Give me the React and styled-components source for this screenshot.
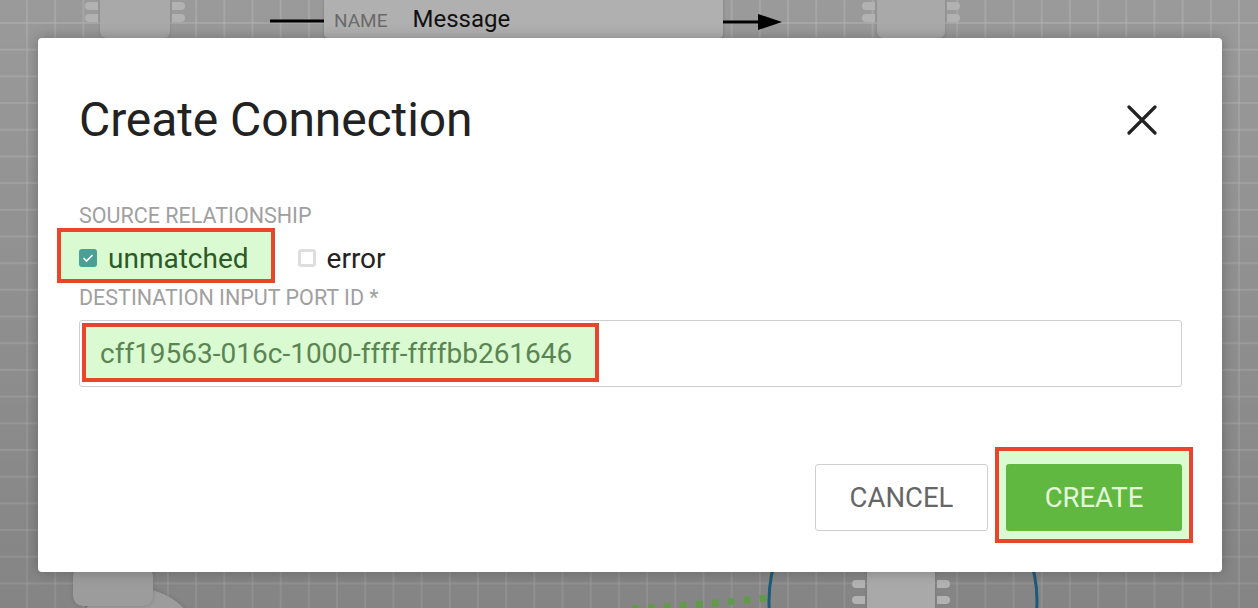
import React from "react";
import styled, { createGlobalStyle } from "styled-components";

const GlobalStyle = createGlobalStyle`
  html, body { margin: 0; padding: 0; }
  body {
    width: 1258px;
    height: 608px;
    overflow: hidden;
    font-family: Roboto, "Liberation Sans", Arial, sans-serif;
  }
`;

const Canvas = styled.div`
  position: relative;
  width: 1258px;
  height: 608px;
  overflow: hidden;
  background-color: #9a9a9a;
  background-image:
    linear-gradient(to right, rgba(190, 190, 190, 0.35) 2px, transparent 2px),
    linear-gradient(to bottom, rgba(190, 190, 190, 0.35) 2px, transparent 2px);
  background-size: 28.2px 26.7px;
  background-position: 26px 22px;
`;

const Shade = styled.div`
  position: absolute;
  inset: 0;
  background: linear-gradient(to bottom, rgba(0, 0, 0, 0) 0%, rgba(0, 0, 0, 0.14) 100%);
`;

const Node = styled.div`
  position: absolute;
  left: ${(p) => p.x}px;
  top: ${(p) => p.y}px;
  width: ${(p) => p.w}px;
  height: ${(p) => p.h}px;
  background: #a9a9a9;
  border-radius: 6px;
  box-shadow: 0 1px 3px rgba(0, 0, 0, 0.15);
`;

const Port = styled.span`
  position: absolute;
  ${(p) => (p.side === "left" ? "left: -15px;" : "right: -15px;")}
  top: ${(p) => p.y}px;
  width: 13px;
  height: 8px;
  background: #b2b2b2;
  border-radius: ${(p) => (p.side === "left" ? "4px 0 0 4px" : "0 4px 4px 0")};
`;

const NameLabel = styled.div`
  position: absolute;
  left: 324px;
  top: -4px;
  width: 399px;
  height: 42px;
  background: #b0b0b0;
  border-radius: 4px;
  display: flex;
  align-items: center;
  padding-left: 10px;
  gap: 25px;
  box-sizing: border-box;
  box-shadow: 0 1px 3px rgba(0, 0, 0, 0.2);
`;

const NameKey = styled.span`
  font-size: 19px;
  color: #6a6a6a;
  margin-top: 6px;
`;

const NameValue = styled.span`
  font-size: 24px;
  color: #111;
  margin-top: 4px;
`;

const Wires = styled.svg`
  position: absolute;
  left: 0;
  top: 0;
`;

const BlobHead = styled.div`
  position: absolute;
  left: 73px;
  top: 566px;
  width: 80px;
  height: 40px;
  background: #9c9c9c;
  border-radius: 10px;
  box-shadow: 0 0 4px rgba(0, 0, 0, 0.15);
`;

const BlobBody = styled.div`
  position: absolute;
  left: 70px;
  top: 588px;
  width: 130px;
  height: 120px;
  background: #9c9c9c;
  border-radius: 50%;
  box-shadow: 0 0 4px rgba(0, 0, 0, 0.15);
`;

const Overlay = styled.div`
  position: absolute;
  inset: 0;
  display: flex;
  align-items: flex-start;
  justify-content: flex-start;
  padding: 38px 0 0 38px;
`;

const Modal = styled.div`
  width: 1184px;
  height: 534px;
  background: #fff;
  border-radius: 4px;
  box-shadow: 0 0 14px rgba(0, 0, 0, 0.25);
  box-sizing: border-box;
  padding: 41px 40px 0 41px;
  display: flex;
  flex-direction: column;
`;

const Header = styled.div`
  display: flex;
  align-items: center;
  justify-content: space-between;
  height: 80px;
`;

const Title = styled.h1`
  margin: 0;
  font-weight: 400;
  font-size: 48px;
  color: #222;
  letter-spacing: -0.1px;
`;

const CloseButton = styled.button`
  border: 0;
  background: none;
  padding: 0;
  width: 30px;
  height: 30px;
  margin-right: 25px;
  margin-top: 2px;
  display: flex;
  cursor: pointer;
`;

const FieldLabel = styled.div`
  font-size: 21.5px;
  color: #a0a0a0;
  text-transform: uppercase;
  line-height: 24px;
  margin-top: ${(p) => p.top || 0}px;
`;

const CheckRow = styled.div`
  display: flex;
  align-items: center;
  margin-left: -22px;
  height: 55px;
`;

const CheckOption = styled.label`
  display: flex;
  align-items: center;
  gap: 11px;
  height: 55px;
  box-sizing: border-box;
  padding: 5px 22px 0 18px;
  font-size: 28px;
  color: ${(p) => (p.highlight ? "#2c5a26" : "#222")};
  background: ${(p) => (p.highlight ? "#dafad2" : "transparent")};
  border: 4px solid ${(p) => (p.highlight ? "#e9452d" : "transparent")};
  margin-left: ${(p) => (p.highlight ? 0 : 1)}px;
`;

const Box = styled.span`
  width: 18px;
  height: 18px;
  border-radius: 3px;
  box-sizing: border-box;
  display: flex;
  align-items: center;
  justify-content: center;
  margin-top: -1px;
  background: ${(p) => (p.checked ? "#4aa096" : "#fff")};
  border: ${(p) => (p.checked ? "0" : "3px solid #dedede")};
`;

const InputFrame = styled.div`
  margin-top: 10px;
  height: 67px;
  border: 1px solid #cfcfcf;
  border-radius: 3px;
  box-sizing: border-box;
  padding: 2px;
  display: flex;
  align-items: flex-start;
`;

const InputValue = styled.div`
  height: 59px;
  box-sizing: border-box;
  padding: 2px 23px 0 14px;
  display: flex;
  align-items: center;
  background: #dafad2;
  border: 4px solid #e9452d;
  font-size: 28px;
  color: #5a8553;
`;

const Footer = styled.div`
  margin-top: auto;
  margin-bottom: 29px;
  display: flex;
  justify-content: flex-end;
  align-items: flex-end;
  gap: 7px;
  margin-right: -11px;
`;

const Button = styled.button`
  height: 67px;
  box-sizing: border-box;
  border-radius: 3px;
  font-family: inherit;
  font-size: 27.5px;
  padding: 0;
  cursor: pointer;
  width: ${(p) => p.w}px;
  background: ${(p) => (p.primary ? "#61b840" : "#fff")};
  color: ${(p) => (p.primary ? "#e3f7d8" : "#666")};
  border: ${(p) => (p.primary ? "0" : "1px solid #cfcfcf")};
`;

const CancelSlot = styled.div`
  margin-bottom: 12px;
  display: flex;
`;

const Highlight = styled.div`
  padding: 13px 7px 8px;
  background: #dafad2;
  border: 4px solid #e9452d;
  display: flex;
`;

export default function App() {
  return (
    <>
      <GlobalStyle />
      <Canvas>
        <Shade />
        <Node x={100} y={-10} w={70} h={48}>
          <Port side="left" y={12} />
          <Port side="left" y={24} />
          <Port side="right" y={12} />
          <Port side="right" y={24} />
        </Node>
        <Node x={877} y={-10} w={68} h={48}>
          <Port side="left" y={12} />
          <Port side="left" y={24} />
          <Port side="right" y={12} />
          <Port side="right" y={24} />
        </Node>
        <Wires width="1258" height="608">
          <line x1="270" y1="21" x2="324" y2="21" stroke="#000" strokeWidth="3" />
          <line x1="723" y1="22" x2="768" y2="22" stroke="#000" strokeWidth="3" />
          <path d="M758 14 L782 22 L758 30 Z" fill="#000" />
          <circle cx="903" cy="601" r="134" fill="none" stroke="#1d5a78" strokeWidth="3" />
          <path
            d="M632 609 Q700 605 768 598"
            fill="none"
            stroke="#629a4c"
            strokeWidth="7"
            strokeDasharray="7 9"
          />
        </Wires>
        <Node x={867} y={560} w={68} h={60}>
          <Port side="left" y={20} />
          <Port side="left" y={36} />
          <Port side="right" y={20} />
          <Port side="right" y={36} />
        </Node>
        <NameLabel>
          <NameKey>NAME</NameKey>
          <NameValue>Message</NameValue>
        </NameLabel>
        <BlobBody />
        <BlobHead />
        <Overlay>
          <Modal>
            <Header>
              <Title>Create Connection</Title>
              <CloseButton aria-label="close">
                <svg width="30" height="30" viewBox="0 0 30 30">
                  <path d="M2 2 L28 28 M28 2 L2 28" stroke="#222" strokeWidth="3.2" strokeLinecap="round" />
                </svg>
              </CloseButton>
            </Header>
            <FieldLabel top={45}>Source Relationship</FieldLabel>
            <CheckRow>
              <CheckOption highlight>
                <Box checked>
                  <svg width="12" height="10" viewBox="0 0 12 10">
                    <path d="M1.5 5 L4.5 8 L10.5 2" fill="none" stroke="#fff" strokeWidth="1.6" />
                  </svg>
                </Box>
                unmatched
              </CheckOption>
              <CheckOption>
                <Box />
                error
              </CheckOption>
            </CheckRow>
            <FieldLabel top={3}>Destination Input Port ID *</FieldLabel>
            <InputFrame>
              <InputValue>cff19563-016c-1000-ffff-ffffbb261646</InputValue>
            </InputFrame>
            <Footer>
              <CancelSlot>
                <Button w={173}>CANCEL</Button>
              </CancelSlot>
              <Highlight>
                <Button primary w={176}>CREATE</Button>
              </Highlight>
            </Footer>
          </Modal>
        </Overlay>
      </Canvas>
    </>
  );
}
